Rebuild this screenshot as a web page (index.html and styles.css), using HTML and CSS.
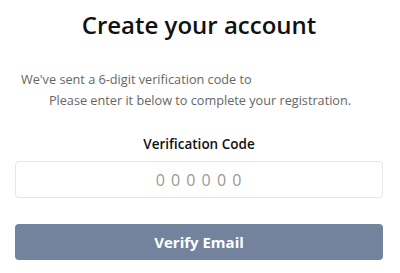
FILE: index.html
```html
<!DOCTYPE html>
<html lang="en">
<head>
    <meta charset="UTF-8">
    <meta name="viewport" content="width=device-width, initial-scale=1.0">
    <title>Create your account</title>
    <link rel="stylesheet" href="styles.css">
</head>
<body>

    <div class="verify-container">
        <h1 class="title">Create your account</h1>

        <p class="intro">
            <span class="intro-first">We've sent a 6-digit verification code to</span>
            <span class="intro-second">Please enter it below to complete your registration.</span>
        </p>

        <form class="verify-form">
            <label for="codeInput" class="code-label">Verification Code</label>
            <input type="text" id="codeInput" class="code-input" placeholder="0 0 0 0 0 0" maxlength="6">
            <button type="submit" class="verify-button">Verify Email</button>
        </form>
    </div>

</body>
</html>
```

FILE: styles.css
```css
/* Global Styles */
body {
    font-family: "Open Sans", Arial, sans-serif;
    background-color: #ffffff;
    margin: 0;
    padding: 0;
    color: #111;
}

.verify-container {
    padding: 11px 17px 0 15px;
}

.title {
    font-size: 24px;
    font-weight: 600;
    text-align: center;
    margin: 0;
    line-height: 28px;
    color: #111;
}

.intro {
    margin: 30px 0 0 0;
    font-size: 12.7px;
    line-height: 21px;
    color: #666;
}

.intro-first {
    display: block;
    padding-left: 6px;
}

.intro-second {
    display: block;
    text-align: center;
    padding-left: 2px;
}

.verify-form {
    display: flex;
    flex-direction: column;
    margin-top: 24px;
}

.code-label {
    text-align: center;
    font-size: 13.5px;
    font-weight: 600;
    color: #111;
    margin-bottom: 8px;
}

.code-input {
    height: 37px;
    box-sizing: border-box;
    border: 1px solid #e6e6e6;
    border-radius: 4px;
    font-family: inherit;
    font-size: 16px;
    text-align: center;
    outline: none;
}

.code-input::placeholder {
    color: #999;
    letter-spacing: 1px;
}

.verify-button {
    margin-top: 26px;
    height: 36px;
    border: none;
    border-radius: 4px;
    background-color: #73839e;
    color: #fff;
    font-family: inherit;
    font-size: 15px;
    font-weight: 700;
    cursor: pointer;
}
```
